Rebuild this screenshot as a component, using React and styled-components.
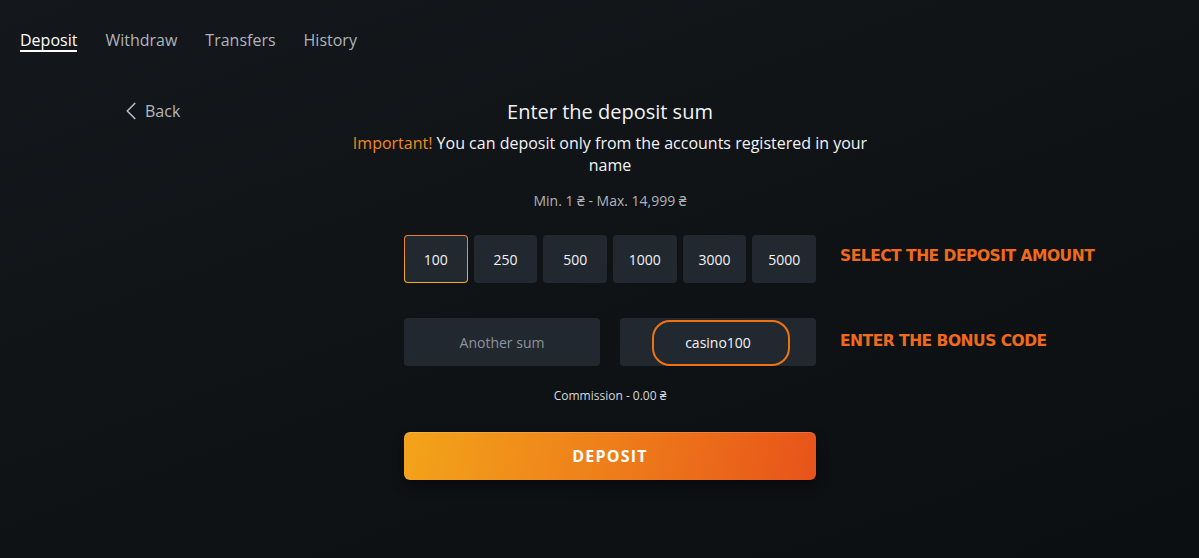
import React, { useState } from 'react'
import styled, { createGlobalStyle } from 'styled-components'
import { ChevronLeft } from 'lucide-react'

const Global = createGlobalStyle`
  html, body {
    margin: 0;
    padding: 0;
    background: #111418;
    font-family: "Open Sans", "Noto Sans", sans-serif;
  }
  #root {
    min-height: 558px;
    background: linear-gradient(160deg, #14171b 0%, #0f1215 60%, #0c0f12 100%);
  }
`

const Tabs = styled.nav`
  display: flex;
  gap: 28px;
  padding: 30px 0 0 20px;
`

const Tab = styled.a`
  font-size: 16px;
  line-height: 20px;
  color: ${p => (p.$active ? '#ffffff' : '#aeb4bb')};
  border-bottom: 2px solid ${p => (p.$active ? '#ffffff' : 'transparent')};
  cursor: pointer;
`

const Body = styled.div`
  display: grid;
  grid-template-columns: 223px 520px;
  padding: 46px 0 0 127px;
`

const Back = styled.a`
  display: flex;
  align-items: center;
  height: 28px;
  color: #b4b9bf;
  font-size: 16px;
  margin-top: -1px;
  svg {
    margin: 0 -1px 0 -11px;
  }
`

const Main = styled.section`
  display: flex;
  flex-direction: column;
  align-items: center;
  text-align: center;
`

const Title = styled.h2`
  margin: 0;
  font-size: 20px;
  line-height: 28px;
  font-weight: 400;
  color: #f2f3f5;
`

const Notice = styled.p`
  margin: 6px 0 0;
  font-size: 16px;
  line-height: 22px;
  color: #f2f3f5;
  span {
    color: #f18a1c;
  }
`

const Limits = styled.div`
  margin-top: 16px;
  font-size: 14px;
  line-height: 18px;
  color: #aeb3ba;
`

const Row = styled.div`
  position: relative;
  display: flex;
  gap: ${p => p.$gap}px;
  width: 412px;
  margin-top: ${p => p.$top}px;
`

const Amount = styled.button`
  flex: 1;
  height: 48px;
  border-radius: 4px;
  font-family: inherit;
  font-size: 14px;
  color: #f2f3f5;
  background: ${p =>
    p.$active
      ? 'linear-gradient(#22282f, #22282f) padding-box, linear-gradient(180deg, #f07a2e, #f5b019) border-box'
      : '#22282f'};
  border: 1px solid transparent;
  padding: 0;
  cursor: pointer;
`

const Field = styled.div`
  position: relative;
  flex: 1;
  height: 48px;
  border-radius: 4px;
  background: #22282f;
  display: flex;
  align-items: center;
  justify-content: center;
  font-size: 14px;
  color: ${p => (p.$muted ? '#8e949b' : '#f2f3f5')};
`

const Ring = styled.span`
  position: absolute;
  left: 32px;
  top: 2px;
  width: 138px;
  height: 46px;
  box-sizing: border-box;
  border: 2.5px solid #f07313;
  border-radius: 18px;
`

const Label = styled.span`
  position: absolute;
  left: calc(100% + 24px);
  top: calc(50% - ${p => p.$lift}px);
  transform: translateY(-50%);
  white-space: nowrap;
  font-family: "DejaVu Sans", sans-serif;
  font-weight: 700;
  font-size: 15.5px;
  letter-spacing: -0.5px;
  color: #ef6a1a;
`

const Commission = styled.div`
  margin-top: 22px;
  font-size: 12px;
  line-height: 16px;
  color: #d6d9dd;
`

const Submit = styled.button`
  margin-top: 28px;
  width: 412px;
  height: 48px;
  border: none;
  border-radius: 6px;
  background: linear-gradient(100deg, #f3a41a 0%, #ee7e1a 50%, #e8531a 100%);
  box-shadow: 0 6px 12px rgba(0, 0, 0, 0.45), inset 0 1px 0 rgba(255, 255, 255, 0.15);
  color: #fff;
  font-family: inherit;
  font-size: 16px;
  font-weight: 700;
  letter-spacing: 1.2px;
  cursor: pointer;
`

const amounts = [100, 250, 500, 1000, 3000, 5000]

export default function App() {
  const [selected, setSelected] = useState(100)
  return (
    <>
      <Global />
      <Tabs>
        <Tab $active>Deposit</Tab>
        <Tab>Withdraw</Tab>
        <Tab>Transfers</Tab>
        <Tab>History</Tab>
      </Tabs>
      <Body>
        <div>
          <Back>
            <ChevronLeft size={30} strokeWidth={1.4} />
            Back
          </Back>
        </div>
        <Main>
          <Title>Enter the deposit sum</Title>
          <Notice>
            <span>Important!</span> You can deposit only from the accounts registered in your name
          </Notice>
          <Limits>Min. 1 ₴ - Max. 14,999 ₴</Limits>
          <Row $gap={6} $top={25}>
            {amounts.map(a => (
              <Amount key={a} $active={a === selected} onClick={() => setSelected(a)}>
                {a}
              </Amount>
            ))}
            <Label $lift={3}>SELECT THE DEPOSIT AMOUNT</Label>
          </Row>
          <Row $gap={20} $top={35}>
            <Field $muted>Another sum</Field>
            <Field>
              casino100
              <Ring />
            </Field>
            <Label $lift={1}>ENTER THE BONUS CODE</Label>
          </Row>
          <Commission>Commission - 0.00 ₴</Commission>
          <Submit>DEPOSIT</Submit>
        </Main>
      </Body>
    </>
  )
}
